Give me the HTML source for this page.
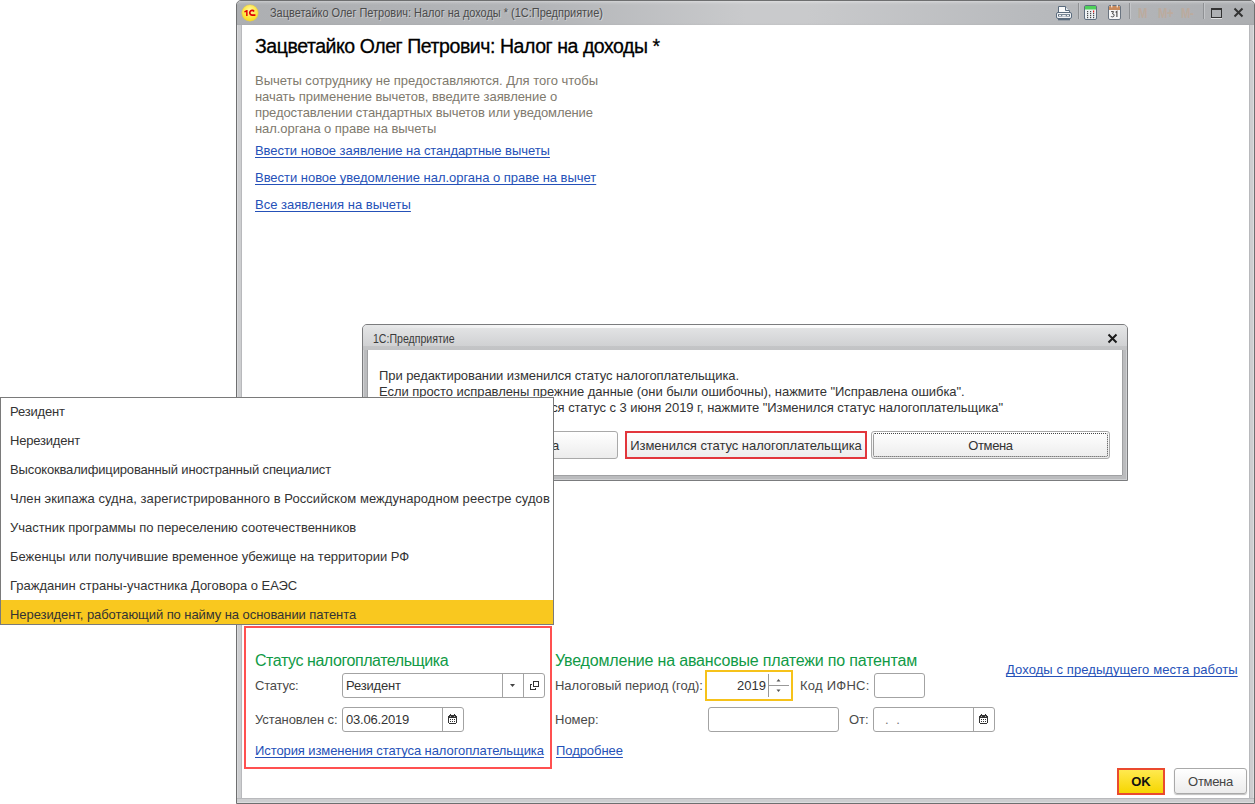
<!DOCTYPE html>
<html><head><meta charset="utf-8">
<style>
*{margin:0;padding:0;box-sizing:border-box}
html,body{width:1255px;height:804px;overflow:hidden;background:#fff;font-family:"Liberation Sans",sans-serif;position:relative}
.a{position:absolute;white-space:nowrap}
.t13{font-size:13px;line-height:16px}
.lnk{color:#2551b8;text-decoration:underline;text-underline-offset:2px;text-decoration-skip-ink:none}
.gray{color:#807a6e}
.lbl{color:#4a4a4a}
.green{color:#109a46;font-size:16px;line-height:18px}
.fld{position:absolute;border:1px solid #a3a3a3;border-radius:3px;background:#fff}
.vdiv{position:absolute;top:0;bottom:0;width:1px;background:#a3a3a3}
.btn{position:absolute;border:1px solid #a9a9a9;border-radius:3px;background:linear-gradient(#ffffff,#ececec);color:#333;font-size:13px;line-height:27px;text-align:center}
.sep{position:absolute;top:3px;width:2px;height:16px;background:linear-gradient(90deg,#8f9194 50%,#c3c5c8 50%)}
.mm{position:absolute;top:6px;font-size:14px;font-weight:bold;color:#bcab9e;line-height:14px;transform:scaleX(0.8);transform-origin:0 0;letter-spacing:-0.5px}
</style></head><body>

<!-- main window -->
<div class="a" style="left:236px;top:0;width:1019px;height:804px;background:#c8c9cb;border:1px solid #6e6f70;border-radius:5px 5px 0 0"></div>
<div class="a" style="left:237px;top:1px;width:1017px;height:24px;border-radius:4px 4px 0 0;background:linear-gradient(rgba(255,255,255,.35) 0,rgba(255,255,255,.1) 2px,rgba(255,255,255,0) 4px,rgba(0,0,0,0) 22px,rgba(0,0,0,.03) 24px),linear-gradient(90deg,#adafb2 0%,#b3b5b8 30%,#c9cacc 50%,#c9cacc 56%,#b8babd 78%,#acaeb1 100%)"></div>
<div class="a" style="left:237px;top:25px;width:5px;height:773px;background:linear-gradient(90deg,#d9dadc 0,#d9dadc 1px,#cdced0 1px,#cdced0 4px,#b8b9bc 4px)"></div>
<div class="a" style="left:1249px;top:25px;width:5px;height:773px;background:linear-gradient(90deg,#b8b9bc 0,#b8b9bc 1px,#cdced0 1px,#cdced0 4px,#dcdddf 4px)"></div>
<div class="a" style="left:237px;top:798px;width:1017px;height:5px;background:linear-gradient(#b8b9bc 0,#b8b9bc 1px,#cdced0 1px,#cdced0 4px,#dcdddf 4px)"></div>
<div class="a" style="left:242px;top:25px;width:1007px;height:773px;background:#fff"></div>

<!-- title bar -->
<div class="a" style="left:242px;top:5px;width:16px;height:16px;border-radius:50%;background:radial-gradient(circle at 50% 35%,#fff7b0 0,#ffe94a 45%,#f7d000 100%);box-shadow:0 0 0 0.5px #e8c640"></div>
<svg class="a" style="left:242px;top:5px" width="16" height="16" viewBox="0 0 16 16"><path d="M2.2 6.2L4.6 4.9H5.6V11H4.1V7L2.6 7.6z" fill="#e00000"/><path d="M12.1 6.4A2.4 2.4 0 1 0 10 10.2L13.4 10.2" fill="none" stroke="#e00000" stroke-width="1.7"/></svg>
<div class="a" style="left:270px;top:6px;font-size:12px;line-height:14px;transform:scaleX(0.913);transform-origin:0 0;color:#4b4b4b;text-shadow:1px 1px 0 rgba(255,255,255,0.35)">Зацветайко Олег Петрович: Налог на доходы * (1С:Предприятие)</div>

<!-- title icons -->
<svg class="a" style="left:1052px;top:2px" width="24" height="20" viewBox="0 0 24 20">
 <path d="M6.5 4.5H13.5L17.5 9V10.5H6.5Z" fill="#fafafa" stroke="#5a6b7d"/>
 <path d="M13.5 4.5V8.5H17.5" fill="#e4e8ec" stroke="#5a6b7d"/>
 <rect x="4.5" y="10.5" width="15" height="6" rx="1.5" fill="#f2f3f5" stroke="#5a6b7d"/>
 <rect x="6" y="12.2" width="12" height="2.3" fill="#5a6b7d"/>
 <rect x="7" y="12.9" width="2.2" height="1" fill="#fff"/><rect x="14.8" y="12.9" width="2.2" height="1" fill="#fff"/><rect x="10.2" y="13.1" width="3.6" height="1.2" fill="#fff"/>
 <rect x="6" y="16.5" width="12" height="1.8" fill="#5a6b7d"/>
</svg>
<div class="sep" style="left:1078px"></div>
<svg class="a" style="left:1083px;top:5px" width="15" height="16" viewBox="0 0 15 16">
 <rect x="1.5" y="0.5" width="12" height="14" rx="1.5" fill="#eef2f4" stroke="#5f6e7e"/>
 <rect x="2" y="1" width="11" height="3.5" fill="#4fd05a"/>
 <g fill="#4a4a4a"><rect x="4" y="6" width="1.2" height="1.2"/><rect x="7" y="6" width="1.2" height="1.2"/><rect x="4" y="8" width="1.2" height="1.2"/><rect x="7" y="8" width="1.2" height="1.2"/><rect x="10" y="8" width="1.2" height="1.2"/><rect x="4" y="10" width="1.2" height="1.2"/><rect x="7" y="10" width="1.2" height="1.2"/><rect x="10" y="10" width="1.2" height="1.2"/><rect x="4" y="12" width="1.2" height="1.2"/><rect x="7" y="12" width="1.2" height="1.2"/><rect x="10" y="12" width="1.2" height="1.2"/></g>
 <rect x="10" y="5.5" width="1.2" height="2" fill="#e02020"/>
</svg>
<svg class="a" style="left:1108px;top:4px" width="14" height="16" viewBox="0 0 14 16">
 <rect x="0.5" y="1.5" width="12" height="14" rx="1.5" fill="#f6f7f8" stroke="#6a7480"/>
 <path d="M1 3.2Q1 2 2.2 2H10.8Q12 2 12 3.2V6H1z" fill="#c98a5b"/>
 <rect x="3.3" y="0.8" width="1" height="2.6" fill="#fff"/><rect x="8.7" y="0.8" width="1" height="2.6" fill="#fff"/>
 <path d="M3.1 7.6H5.6L4.4 9.7Q6.1 9.7 6.1 11.3Q6.1 12.9 4.4 12.9Q3.3 12.9 2.9 12.1" fill="none" stroke="#444" stroke-width="1"/>
 <path d="M7.6 8.4L8.9 7.4V13" fill="none" stroke="#444" stroke-width="1.1"/>
</svg>
<div class="sep" style="left:1129px"></div>
<div class="mm" style="left:1138px">M</div>
<div class="mm" style="left:1158px">M+</div>
<div class="mm" style="left:1181px">M-</div>
<div class="sep" style="left:1203px"></div>
<div class="a" style="left:1211px;top:8px;width:11px;height:10px;border:1px solid #333;border-top-width:2px;box-shadow:0 1px 0 rgba(255,255,255,.6)"></div>
<svg class="a" style="left:1233px;top:7px" width="11" height="11" viewBox="0 0 11 11"><path d="M1.5 1.5l8 8M9.5 1.5l-8 8" stroke="#333" stroke-width="2"/></svg>

<!-- main header -->
<div class="a" style="left:255px;top:34px;font-size:19.5px;line-height:24px;letter-spacing:-0.44px;color:#000;-webkit-text-stroke:0.3px #000">Зацветайко Олег Петрович: Налог на доходы *</div>
<div class="a t13 gray" style="left:255px;top:73px;letter-spacing:-0.02px">Вычеты сотруднику не предоставляются. Для того чтобы</div>
<div class="a t13 gray" style="left:255px;top:89px;letter-spacing:-0.06px">начать применение вычетов, введите заявление о</div>
<div class="a t13 gray" style="left:255px;top:105px;letter-spacing:-0.1px">предоставлении стандартных вычетов или уведомление</div>
<div class="a t13 gray" style="left:255px;top:121px;letter-spacing:-0.06px">нал.органа о праве на вычеты</div>
<div class="a t13 lnk" style="left:255px;top:143px;letter-spacing:-0.05px">Ввести новое заявление на стандартные вычеты</div>
<div class="a t13 lnk" style="left:255px;top:170px;letter-spacing:-0.03px">Ввести новое уведомление нал.органа о праве на вычет</div>
<div class="a t13 lnk" style="left:255px;top:197px">Все заявления на вычеты</div>

<!-- dialog -->
<div class="a" style="left:362px;top:324px;width:766px;height:157px;border:1px solid #7b7c7e;border-radius:5px 5px 0 0;background:#bbbcbe;box-shadow:inset 1px 0 0 #d0d1d3,inset -1px 0 0 #d0d1d3,inset 0 -1px 0 #d0d1d3"></div>
<div class="a" style="left:363px;top:325px;width:764px;height:25px;border-radius:4px 4px 0 0;background:linear-gradient(#e6e7e8 0,#e2e3e4 3px,#d0d1d3 21px,#c4c5c7 21px,#c2c3c5 25px)"></div>
<div class="a" style="left:368px;top:325px;width:754px;height:3px;background:linear-gradient(90deg,rgba(255,255,255,0) 0%,rgba(255,255,255,.85) 25%,rgba(255,255,255,.9) 60%,rgba(255,255,255,.5) 85%,rgba(255,255,255,0) 100%)"></div>
<div class="a" style="left:368px;top:350px;width:754px;height:125px;background:#fff;box-shadow:-1px 0 0 #a0a1a3,1px 0 0 #a0a1a3,0 1px 0 #a0a1a3"></div>
<div class="a" style="left:373px;top:332px;font-size:12px;line-height:14px;transform:scaleX(0.88);transform-origin:0 0;color:#3a3a3a">1С:Предприятие</div>
<svg class="a" style="left:1107px;top:333px" width="11" height="11" viewBox="0 0 11 11"><path d="M1.5 1.5l8 8M9.5 1.5l-8 8" stroke="#1a1a1a" stroke-width="2"/></svg>
<div class="a t13" style="left:379px;top:368px;color:#333;letter-spacing:-0.074px">При редактировании изменился статус налогоплательщика.</div>
<div class="a t13" style="left:379px;top:384px;color:#333;letter-spacing:-0.048px">Если просто исправлены прежние данные (они были ошибочны), нажмите "Исправлена ошибка".</div>
<div class="a t13" style="right:252px;top:400px;color:#333;letter-spacing:-0.06px">Если фактически изменился статус с 3 июня 2019 г, нажмите "Изменился статус налогоплательщика"</div>
<div class="btn" style="left:378px;top:431px;width:240px;height:28px">Исправлена ошибка</div>
<div class="btn" style="left:626px;top:431px;width:240px;height:28px;letter-spacing:-0.05px">Изменился статус налогоплательщика</div>
<div class="a" style="left:625px;top:431px;width:242px;height:28px;border:2px solid #e2363c"></div>
<div class="btn" style="left:871px;top:431px;width:239px;height:28px;letter-spacing:-0.36px">Отмена</div>
<div class="a" style="left:873px;top:433px;width:235px;height:24px;border:1px dotted #444;border-radius:2px"></div>

<!-- popup list -->
<div class="a" style="left:0;top:397px;width:554px;height:228px;background:#fff;border:1px solid #7a7a7a"></div>
<div class="a" style="left:1px;top:600px;width:552px;height:24px;background:#f9c81f"></div>
<div class="a t13" style="left:10px;top:404px;color:#333;letter-spacing:-0.17px">Резидент</div>
<div class="a t13" style="left:10px;top:433px;color:#333;letter-spacing:-0.19px">Нерезидент</div>
<div class="a t13" style="left:10px;top:462px;color:#333;letter-spacing:-0.16px">Высококвалифицированный иностранный специалист</div>
<div class="a t13" style="left:10px;top:491px;color:#333;letter-spacing:0.057px">Член экипажа судна, зарегистрированного в Российском международном реестре судов</div>
<div class="a t13" style="left:10px;top:520px;color:#333;letter-spacing:-0.034px">Участник программы по переселению соотечественников</div>
<div class="a t13" style="left:10px;top:549px;color:#333;letter-spacing:-0.02px">Беженцы или получившие временное убежище на территории РФ</div>
<div class="a t13" style="left:10px;top:578px;color:#333;letter-spacing:-0.02px">Гражданин страны-участника Договора о ЕАЭС</div>
<div class="a t13" style="left:10px;top:607px;color:#333;letter-spacing:-0.069px">Нерезидент, работающий по найму на основании патента</div>

<!-- bottom form -->
<div class="a" style="left:244px;top:626px;width:308px;height:143px;border:2px solid #ff5050"></div>
<div class="a green" style="left:255px;top:652px;letter-spacing:-0.435px">Статус налогоплательщика</div>
<div class="a green" style="left:555px;top:652px;letter-spacing:-0.18px">Уведомление на авансовые платежи по патентам</div>

<div class="a t13 lbl" style="left:255px;top:678px;letter-spacing:-0.18px">Статус:</div>
<div class="fld" style="left:342px;top:673px;width:203px;height:25px">
  <div class="vdiv" style="left:159px"></div><div class="vdiv" style="left:180px"></div>
</div>
<div class="a t13" style="left:346px;top:678px;color:#333;letter-spacing:-0.17px">Резидент</div>
<svg class="a" style="left:510px;top:684px" width="5" height="3" viewBox="0 0 5 3"><path d="M0 0h5l-2.5 3z" fill="#444"/></svg>
<svg class="a" style="left:529px;top:680px" width="12" height="12" viewBox="0 0 12 12" shape-rendering="crispEdges"><rect x="4.5" y="1.5" width="5" height="5" fill="none" stroke="#333"/><g fill="#333"><rect x="1" y="4" width="1" height="6"/><rect x="1" y="4" width="2" height="1"/><rect x="1" y="9" width="6" height="1"/><rect x="6" y="8" width="1" height="2"/></g></svg>

<div class="a t13 lbl" style="left:255px;top:712px;letter-spacing:-0.09px">Установлен с:</div>
<div class="fld" style="left:342px;top:707px;width:122px;height:25px"><div class="vdiv" style="left:99px"></div></div>
<div class="a t13" style="left:346px;top:712px;color:#333;letter-spacing:-0.2px">03.06.2019</div>
<svg class="a" style="left:448px;top:714px" width="9" height="10" viewBox="0 0 9 10" shape-rendering="crispEdges"><path d="M1 1h7v1h1v7h-1v1h-7v-1h-1v-7h1z" fill="#333"/><rect x="1" y="4" width="7" height="5" fill="#fff"/><g fill="#333"><rect x="2" y="5" width="1" height="1"/><rect x="4" y="5" width="1" height="1"/><rect x="6" y="5" width="1" height="1"/><rect x="2" y="7" width="1" height="1"/><rect x="4" y="7" width="1" height="1"/><rect x="6" y="7" width="1" height="1"/><rect x="2" y="0" width="1" height="1"/><rect x="6" y="0" width="1" height="1"/></g><rect x="2" y="2" width="1" height="1" fill="#aaa"/><rect x="6" y="2" width="1" height="1" fill="#aaa"/></svg>

<div class="a t13 lnk" style="left:255px;top:743px;letter-spacing:-0.09px">История изменения статуса налогоплательщика</div>

<div class="a t13 lbl" style="left:555px;top:678px;letter-spacing:-0.03px">Налоговый период (год):</div>
<div class="a" style="left:705px;top:670px;width:88px;height:31px;border:2px solid #f6c21a;background:#fff"></div>
<div class="a t13" style="left:700px;top:678px;width:66px;text-align:right;color:#333">2019</div>
<div class="a" style="left:768px;top:674px;width:1px;height:23px;background:#999"></div>
<div class="a" style="left:768px;top:685px;width:21px;height:1px;background:#999"></div>
<svg class="a" style="left:775px;top:678px" width="7" height="16" viewBox="0 0 7 16"><path d="M1.5 3.5h4l-2-2.5z" fill="#555"/><path d="M1.5 11.5h4l-2 2.5z" fill="#555"/></svg>
<div class="a t13 lbl" style="left:800px;top:678px;letter-spacing:0.25px">Код ИФНС:</div>
<div class="fld" style="left:874px;top:673px;width:51px;height:25px"></div>

<div class="a t13 lbl" style="left:555px;top:712px">Номер:</div>
<div class="fld" style="left:708px;top:707px;width:131px;height:25px"></div>
<div class="a t13 lbl" style="left:849px;top:712px">От:</div>
<div class="fld" style="left:873px;top:707px;width:122px;height:25px"><div class="vdiv" style="left:99px"></div></div>
<div class="a t13" style="left:885px;top:712px;color:#777;letter-spacing:2px">. .</div>
<svg class="a" style="left:979px;top:714px" width="9" height="10" viewBox="0 0 9 10" shape-rendering="crispEdges"><path d="M1 1h7v1h1v7h-1v1h-7v-1h-1v-7h1z" fill="#333"/><rect x="1" y="4" width="7" height="5" fill="#fff"/><g fill="#333"><rect x="2" y="5" width="1" height="1"/><rect x="4" y="5" width="1" height="1"/><rect x="6" y="5" width="1" height="1"/><rect x="2" y="7" width="1" height="1"/><rect x="4" y="7" width="1" height="1"/><rect x="6" y="7" width="1" height="1"/><rect x="2" y="0" width="1" height="1"/><rect x="6" y="0" width="1" height="1"/></g><rect x="2" y="2" width="1" height="1" fill="#aaa"/><rect x="6" y="2" width="1" height="1" fill="#aaa"/></svg>
<div class="a t13 lnk" style="left:556px;top:743px;letter-spacing:-0.06px">Подробнее</div>

<div class="a t13 lnk" style="left:1006px;top:662px;letter-spacing:0.088px">Доходы с предыдущего места работы</div>

<!-- OK / Cancel -->
<div class="a" style="left:1117px;top:768px;width:48px;height:27px;border:2px solid #ea4a2e;background:linear-gradient(#ffe94f,#f6d600);font-size:13px;font-weight:bold;line-height:23px;text-align:center;color:#111">OK</div>
<div class="btn" style="left:1174px;top:768px;width:73px;height:26px;line-height:25px;letter-spacing:-0.3px;color:#444;box-shadow:0 1px 1px rgba(0,0,0,.25)">Отмена</div>
</body></html>
